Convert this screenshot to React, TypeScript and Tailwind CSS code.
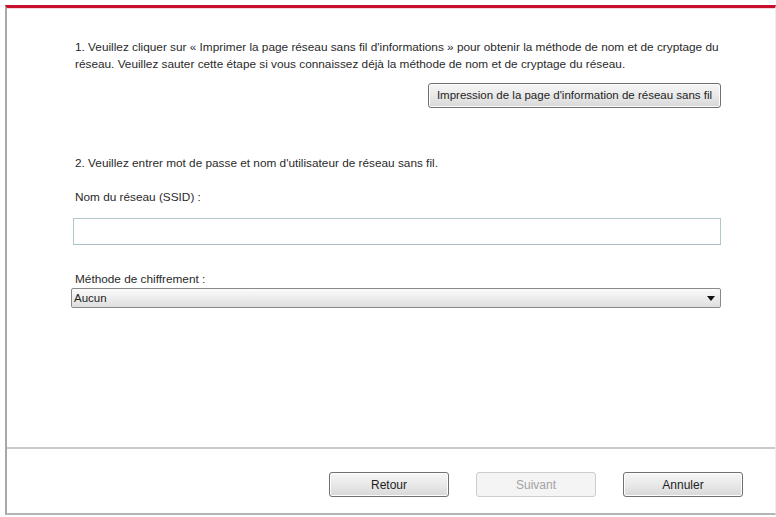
import { useState } from "react";

const font = { fontFamily: '"Liberation Sans", Arial, sans-serif' };

function WinButton({ label, disabled, className = "" }: { label: string; disabled?: boolean; className?: string }) {
  return (
    <button
      disabled={disabled}
      className={`h-[25px] rounded-[3px] border text-[12px] ${
        disabled
          ? "border-[#cdcdcd] bg-[#f4f4f4] text-[#a3a3a3]"
          : "border-[#707070] bg-gradient-to-b from-[#f6f6f6] via-[#e9e9e9] to-[#d8d8d8] text-[#1e1e1e] shadow-[inset_0_0_0_1px_#fcfcfc]"
      } ${className}`}
    >
      {label}
    </button>
  );
}

export default function App() {
  const [ssid, setSsid] = useState("");
  const [method, setMethod] = useState("Aucun");

  return (
    <div className="w-[776px] h-[517px] bg-white pl-[5px] pt-[5px] overflow-hidden text-[#2a2a2a]" style={font}>
      <div className="h-[510px] flex flex-col border-t-[3px] border-t-[#c8102e] border-l-2 border-l-[#a8a8a8] border-b-2 border-b-[#b4b4b4] border-r border-r-[#ececec]">
        <div className="h-[1px] bg-[#f3d6d9]" />
        {/* CONTENT */}
        <div className="flex-1 flex flex-col pl-[68px] pr-[54px] pt-[30px] text-[11.8px] leading-[17px]">
          <p>
            1. Veuillez cliquer sur « Imprimer la page réseau sans fil d'informations » pour obtenir la méthode de nom et de cryptage du
            réseau. Veuillez sauter cette étape si vous connaissez déjà la méthode de nom et de cryptage du réseau.
          </p>

          <div className="flex justify-end mt-[10px]">
            <WinButton
              label="Impression de la page d'information de réseau sans fil"
              className="w-[293px] h-[21px] !text-[11.5px]"
            />
          </div>

          <p className="mt-[47px]">2. Veuillez entrer mot de passe et nom d'utilisateur de réseau sans fil.</p>

          <p className="mt-[17px]">Nom du réseau (SSID) :</p>

          <input
            value={ssid}
            onChange={(e) => setSsid(e.target.value)}
            className="mt-[12px] ml-[-2px] h-[27px] border border-[#b5c6cf] border-b-[#a9c0c9] bg-white outline-none px-1 text-[12px]"
          />

          <p className="mt-[26px]">Méthode de chiffrement :</p>

          <div className="relative ml-[-4px] h-[20px] rounded-[2px] border border-[#8a8a8a] bg-gradient-to-b from-[#fbfbfb] to-[#dedede] flex items-center pl-[2px]">
            <span className="text-[11.5px] text-[#1e1e1e]">{method}</span>
            <select
              value={method}
              onChange={(e) => setMethod(e.target.value)}
              className="absolute inset-0 opacity-0"
            >
              <option>Aucun</option>
              <option>WEP</option>
              <option>WPA/WPA2</option>
            </select>
            <svg className="ml-auto mr-[5px]" width="8" height="5" viewBox="0 0 8 5">
              <path d="M0 0h8L4 5z" fill="#111" />
            </svg>
          </div>
        </div>

        {/* FOOTER */}
        <div className="h-[66px] border-t-2 border-t-[#c9c9c9] flex justify-end gap-[27px] pt-[23px] pr-[32px]">
          <WinButton label="Retour" className="w-[120px]" />
          <WinButton label="Suivant" disabled className="w-[120px]" />
          <WinButton label="Annuler" className="w-[120px]" />
        </div>
      </div>
    </div>
  );
}
